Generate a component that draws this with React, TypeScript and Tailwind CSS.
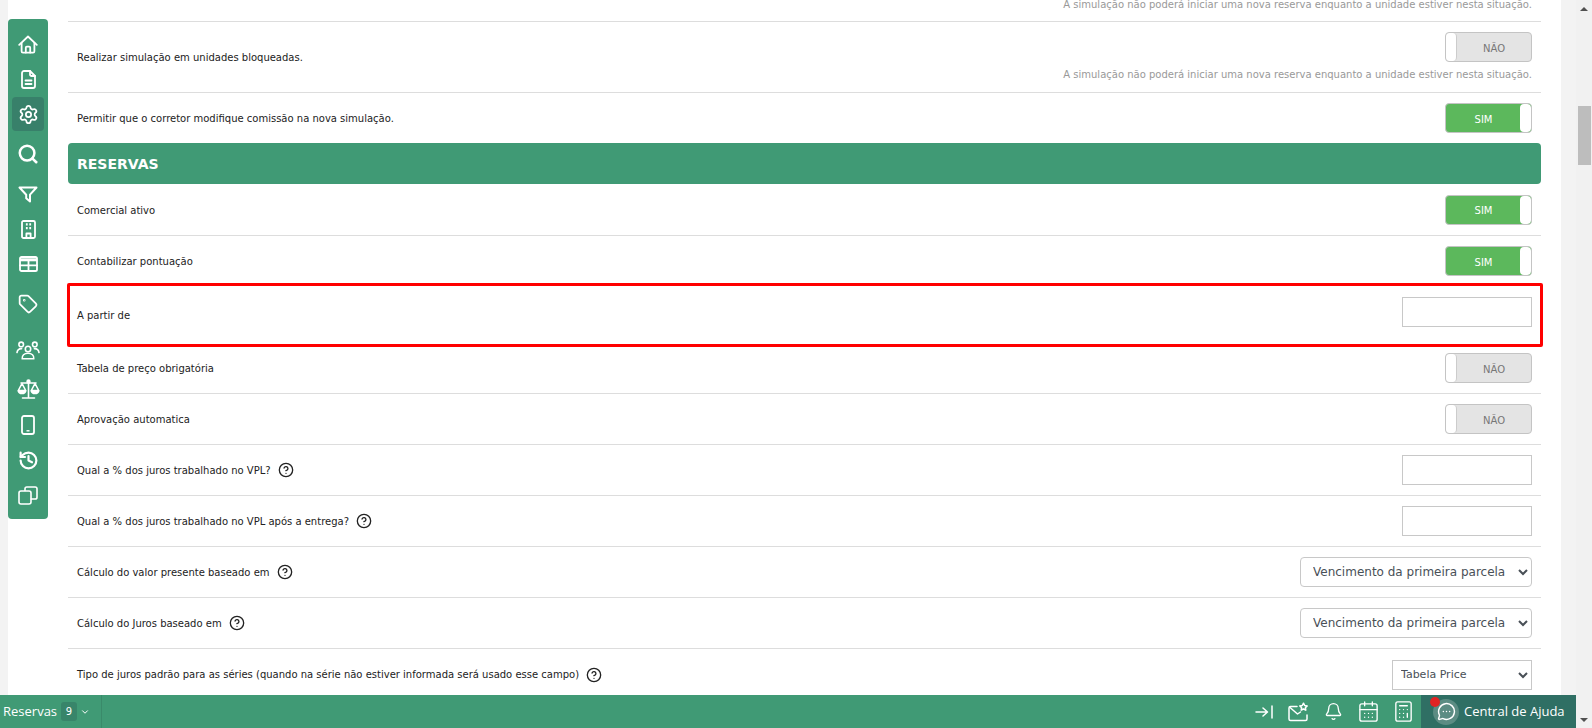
import React from "react";
import { Settings, Search, Tag, History, Bell, CalendarDays, Calculator, MessageCircleMore, ChevronDown, CircleHelp } from "lucide-react";

const font = "font-['DejaVu_Sans',sans-serif]";

function Toggle({ on }: { on: boolean }) {
  return on ? (
    <div className="flex h-[30px] w-[87px] rounded-[4px] border border-[#c4c4c4] bg-[#5cb85c] overflow-hidden">
      <div className="flex-1 flex items-center justify-center pt-[2px] pl-[1px] text-white text-[10px]">SIM</div>
      <div className="w-[11px] bg-white rounded-[4px]" />
    </div>
  ) : (
    <div className="flex h-[30px] w-[87px] rounded-[4px] border border-[#c4c4c4] bg-[#e4e4e4] overflow-hidden">
      <div className="w-[11px] bg-white rounded-[4px] border-r border-[#ccc]" />
      <div className="flex-1 flex items-center justify-center pt-[2px] text-[#777] text-[10px]">NÃO</div>
    </div>
  );
}

function Row({ h = 51, label, help, children, last, extra = "", labelExtra = "" }: { h?: number; label: string; help?: boolean; children?: React.ReactNode; last?: boolean; extra?: string; labelExtra?: string }) {
  return (
    <div className={`flex items-center justify-between px-[9px] ${extra} ${last ? "" : "border-b border-[#ddd]"}`} style={{ height: h }}>
      <div className={`flex items-center text-[10px] text-[#222] ${labelExtra}`}>
        {label}
        {help && <CircleHelp size={16} strokeWidth={2} className="ml-[7px] text-[#222]" />}
      </div>
      {children}
    </div>
  );
}

function TextBox({ extra = "" }: { extra?: string }) {
  return <input className={`h-[30px] w-[130px] border border-[#c8c8c8] bg-white ${extra}`} />;
}

function Sel({ small, text }: { small?: boolean; text: string }) {
  return (
    <select
      className={`h-[30px] border border-[#c8c8c8] bg-white text-[#495057] font-['DejaVu_Sans',sans-serif] ${small ? "w-[140px] pl-[4px] text-[11px]" : "w-[232px] pl-2 rounded-[4px] text-[12px]"}`}
      defaultValue={text}
    >
      <option>{text}</option>
    </select>
  );
}

const s = { fill: "none", stroke: "white", strokeWidth: 1.8, strokeLinecap: "round", strokeLinejoin: "round" } as const;

const HomeI = () => (
  <svg width="20" height="19" viewBox="0 0 20 19" {...s}>
    <path d="M1.2 9.8 10 1.5l8.8 8.3" />
    <path d="M3.6 8v8.2a1.4 1.4 0 0 0 1.4 1.4h10a1.4 1.4 0 0 0 1.4-1.4V8" />
    <path d="M7.8 17.5v-4.8a1 1 0 0 1 1-1h2.4a1 1 0 0 1 1 1v4.8" />
  </svg>
);
const FileI = () => (
  <svg width="15" height="19" viewBox="0 0 15 19" {...s}>
    <path d="M9 1H3a2 2 0 0 0-2 2v13a2 2 0 0 0 2 2h9a2 2 0 0 0 2-2V6z" />
    <path d="M9 1v3.5A1.5 1.5 0 0 0 10.5 6H14" />
    <path d="M4.5 10.5h6M4.5 14h6" />
  </svg>
);
const FunnelI = () => (
  <svg width="20" height="17" viewBox="0 0 20 17" {...s} strokeWidth={2}>
    <path d="M1.5 1.5h17l-6.5 7.2v6.8l-3.8-3.2V8.7z" />
  </svg>
);
const BuildingI = () => (
  <svg width="15" height="19" viewBox="0 0 15 19" {...s}>
    <rect x="1" y="1" width="13" height="17" rx="1.5" />
    <path d="M4.900 4.400h1.800M8.300 4.400h1.800M4.900 8.200h1.800M8.300 8.200h1.800" strokeWidth={2.2} strokeLinecap="butt" />
    <path d="M5.400 18v-4.500h4.200V18" />
  </svg>
);
const TableI = () => (
  <svg width="19" height="16" viewBox="0 0 19 16" {...s}>
    <rect x="1" y="1" width="17" height="14" rx="1.6" />
    <path d="M1 3.800h17" strokeWidth={3} strokeLinecap="butt" />
    <path d="M1 9.400h17M9.500 4v11" />
  </svg>
);
const UsersI = () => (
  <svg width="24" height="19" viewBox="0 0 24 19" {...s} strokeWidth={1.6}>
    <circle cx="5.200" cy="3.400" r="2.300" />
    <circle cx="18.800" cy="3.400" r="2.300" />
    <circle cx="12" cy="8" r="2.700" />
    <path d="M1 11.500c.5-2.600 2.200-4 4.600-3.900M23 11.500c-.5-2.600-2.200-4-4.600-3.900" />
    <path d="M6.200 17.800c-.4-3.400 2-5.500 5.800-5.500s6.200 2.100 5.800 5.500z" />
  </svg>
);
const ScaleI = () => (
  <svg width="23" height="20" viewBox="0 0 23 20" fill="none" stroke="white" strokeWidth="1.6" strokeLinecap="round" strokeLinejoin="round">
    <path d="M11.500 2.500V18M5.500 19h12M4 4h15" />
    <circle cx="11.500" cy="2.500" r="1.400" fill="white" />
    <path d="M5 4.500 1.300 11.500h7.400zM18 4.500l-3.700 7h7.400z" />
    <path d="M1.300 12c.4 1.700 2 2.500 3.700 2.500s3.300-.8 3.700-2.500zM14.300 12c.4 1.700 2 2.500 3.700 2.500s3.300-.8 3.700-2.500z" fill="white" />
  </svg>
);
const PhoneI = () => (
  <svg width="14" height="20" viewBox="0 0 14 20" {...s}>
    <rect x="1" y="1" width="12" height="18" rx="2" />
    <path d="M5.500 15.800h3" strokeWidth={1.4} strokeLinecap="butt" />
  </svg>
);
const CopyI = () => (
  <svg width="20" height="19" viewBox="0 0 20 19" {...s} strokeWidth={1.6}>
    <path d="M7 4.500V2.800A1.800 1.800 0 0 1 8.800 1h8.400A1.800 1.800 0 0 1 19 2.800v8.400a1.800 1.800 0 0 1-1.800 1.800h-4" />
    <rect x="1" y="5" width="12" height="13" rx="2" />
  </svg>
);

const nav: [React.ReactNode, number][] = [
  [<HomeI />, 0],
  [<FileI />, 1],
  [<Settings size={21} strokeWidth={2} color="white" />, 1],
  [<Search size={22} strokeWidth={2.7} color="white" />, 6],
  [<FunnelI />, 6],
  [<BuildingI />, 1],
  [<TableI />, 1],
  [<Tag size={20} strokeWidth={2.1} color="white" />, 6],
  [<UsersI />, 12],
  [<ScaleI />, 5],
  [<PhoneI />, 2],
  [<History size={21} strokeWidth={2.5} color="white" />, 1],
  [<CopyI />, 1],
];

function Sidebar() {
  return (
    <aside className="mt-[19px] w-[40px] h-[500px] shrink-0 rounded-[4px] bg-[#409a75] flex flex-col items-center pt-[8px]">
      {nav.map(([icon, mt], i) => (
        <div key={i} className={`flex w-[32px] h-[34px] shrink-0 items-center justify-center rounded-[4px] ${i === 2 ? "bg-[#38806a]" : ""}`} style={{ marginTop: mt }}>
          {icon}
        </div>
      ))}
    </aside>
  );
}

function BottomBar() {
  return (
    <footer className="h-[33px] shrink-0 bg-[#409a75] flex items-center text-white">
      <div className="h-full w-[102px] flex items-center pl-[3px] border-r border-[#3a8a6a] text-[13px] font-['Open_Sans',sans-serif]">
        Reservas
        <span className="ml-[4px] w-[16px] h-[19px] rounded-[3px] bg-[#38856a] flex items-center justify-center text-[10px] font-['DejaVu_Sans',sans-serif]">9</span>
        <ChevronDown size={10} strokeWidth={2.4} className="ml-[3px]" />
      </div>
      <div className="flex-1" />
      <div className="flex items-center h-full">
        <div className="w-[35px] flex justify-center">
          <svg width="18" height="14" viewBox="0 0 18 14" fill="none" stroke="white" strokeWidth="1.5" strokeLinecap="round" strokeLinejoin="round">
            <path d="M1 7h11M8 3l4.500 4L8 11M17 1v12" />
          </svg>
        </div>
        <div className="w-[35px] flex justify-center">
          <svg width="21" height="20" viewBox="0 0 21 20" fill="none" stroke="white" strokeWidth="1.5" strokeLinecap="round" strokeLinejoin="round">
            <path d="M9 4.500H2.500A1.500 1.500 0 0 0 1 6v11a1.500 1.500 0 0 0 1.500 1.500h15A1.500 1.500 0 0 0 19 17v-4" />
            <path d="M2 5.500 9.500 12l3-2" />
            <path d="M15.500 1.200l1.200 2.300 2.500.4-1.800 1.800.4 2.500-2.300-1.200-2.300 1.200.4-2.500-1.800-1.800 2.500-.4z" />
          </svg>
        </div>
        <div className="w-[35px] flex justify-center"><Bell size={19} strokeWidth={1.7} /></div>
        <div className="w-[35px] flex justify-center"><CalendarDays size={23} strokeWidth={1.4} /></div>
        <div className="w-[35px] flex justify-center"><Calculator size={23} strokeWidth={1.4} /></div>
      </div>
      <div className="relative h-full w-[155px] bg-[#2f6f64] flex items-center pl-[12px]">
        <span className="absolute left-[9px] top-[2px] h-[10px] w-[10px] rounded-full bg-[#e02424]" />
        <div className="h-[26px] w-[26px] mr-[5px] flex items-center justify-center rounded-full bg-[#5b8c83]">
          <MessageCircleMore size={19} strokeWidth={1.8} />
        </div>
        <span className="text-[13px] whitespace-nowrap font-['Open_Sans',sans-serif]">Central de Ajuda</span>
      </div>
    </footer>
  );
}

function Scrollbar() {
  return (
    <div className="w-[16px] h-full bg-[#f1f1f1] flex flex-col items-center">
      <div className="h-[17px] flex items-center justify-center">
        <div className="w-0 h-0 border-x-[4px] border-x-transparent border-b-[4px] border-b-[#505050]" />
      </div>
      <div className="mt-[89px] w-[13px] h-[59px] bg-[#bdbdbd]" />
      <div className="flex-1" />
      <div className="h-[17px] flex items-center justify-center">
        <div className="w-0 h-0 border-x-[4px] border-x-transparent border-t-[4px] border-t-[#505050]" />
      </div>
    </div>
  );
}

const hint = "A simulação não poderá iniciar uma nova reserva enquanto a unidade estiver nesta situação.";

export default function App() {
  return (
    <div className={`flex h-[728px] w-[1592px] overflow-hidden bg-[#f3f3f3] ${font}`}>
      <div className="flex-1 flex flex-col min-w-0">
        <div className="flex-1 min-h-0 flex overflow-hidden">
          <div className="ml-[8px] w-[1553px] flex gap-[20px] bg-white">
            <Sidebar />
            <main className="w-[1473px] h-full">
              <div className="h-[22px] border-b border-[#ddd] flex items-start justify-end pr-[9px] text-[10px] text-[#999] leading-[9px]">{hint}</div>
              <div className="h-[71px] border-b border-[#ddd] flex justify-between px-[9px] pt-[10px]">
                <div className="text-[10px] text-[#222] pt-[18px]">Realizar simulação em unidades bloqueadas.</div>
                <div className="flex flex-col items-end">
                  <Toggle on={false} />
                  <div className="mt-[5px] text-[10px] text-[#999]">{hint}</div>
                </div>
              </div>
              <Row h={50} label="Permitir que o corretor modifique comissão na nova simulação." last><Toggle on /></Row>
              <div className="h-[41px] rounded-[4px] bg-[#409a75] flex items-center pl-[9px] pt-[2px] text-[14px] font-bold text-white">RESERVAS</div>
              <Row h={52} labelExtra="pt-[2px]" label="Comercial ativo"><Toggle on /></Row>
              <Row h={47} extra="pt-[3px]" label="Contabilizar pontuação" last><Toggle on /></Row>
              <div className="flex h-[64px] items-center justify-between rounded-[2px] border-[3px] border-[#ff0000] pl-[7px] pr-[8px] text-[10px] text-[#222] -ml-px -mr-[2px]">
                A partir de
                <TextBox extra="mb-[6px]" />
              </div>
              <Row h={47} extra="pb-[4px]" label="Tabela de preço obrigatória"><Toggle on={false} /></Row>
              <Row label="Aprovação automatica"><Toggle on={false} /></Row>
              <Row label="Qual a % dos juros trabalhado no VPL?" help><TextBox /></Row>
              <Row label="Qual a % dos juros trabalhado no VPL após a entrega?" help><TextBox /></Row>
              <Row label="Cálculo do valor presente baseado em" help><Sel text="Vencimento da primeira parcela" /></Row>
              <Row label="Cálculo do Juros baseado em" help><Sel text="Vencimento da primeira parcela" /></Row>
              <Row label="Tipo de juros padrão para as séries (quando na série não estiver informada será usado esse campo)" help last><Sel small text="Tabela Price" /></Row>
            </main>
          </div>
        </div>
        <BottomBar />
      </div>
      <Scrollbar />
    </div>
  );
}
